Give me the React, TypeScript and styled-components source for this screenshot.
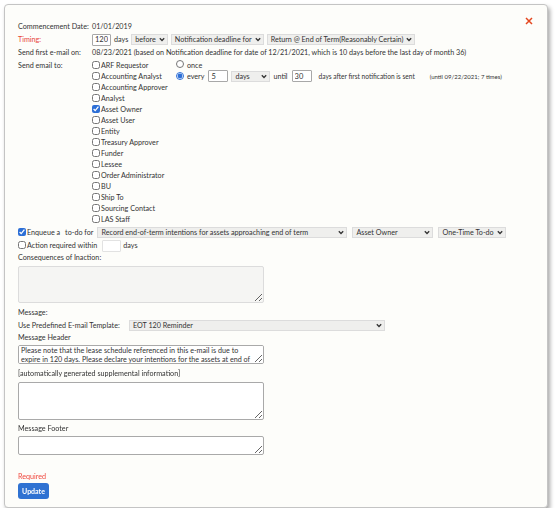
import React from 'react';
import styled, { createGlobalStyle } from 'styled-components';

const GlobalStyle = createGlobalStyle`
  html, body { margin: 0; padding: 0; background: #ffffff; }
  body {
    font-family: Lato, "Liberation Sans", sans-serif;
    font-size: 7.2px;
    color: #333;
  }
`;

const recipients: { name: string; checked?: boolean }[] = [
  { name: 'ARF Requestor' },
  { name: 'Accounting Analyst' },
  { name: 'Accounting Approver' },
  { name: 'Analyst' },
  { name: 'Asset Owner', checked: true },
  { name: 'Asset User' },
  { name: 'Entity' },
  { name: 'Treasury Approver' },
  { name: 'Funder' },
  { name: 'Lessee' },
  { name: 'Order Administrator' },
  { name: 'BU' },
  { name: 'Ship To' },
  { name: 'Sourcing Contact' },
  { name: 'LAS Staff' },
];

function Chevron() {
  return (
    <svg width="6" height="5" viewBox="0 0 6 5">
      <path d="M0.8 1.2 L3 3.5 L5.2 1.2" stroke="#333" strokeWidth="1.3" fill="none" />
    </svg>
  );
}

function Dropdown({ value, width }: { value: string; width?: number }) {
  return (
    <Select $width={width}>
      <span>{value}</span>
      <Chevron />
    </Select>
  );
}

export default function App() {
  return (
    <>
      <GlobalStyle />
      <Panel>
        <Close aria-label="close">
          <svg width="8" height="8" viewBox="0 0 8 8">
            <path d="M1 1 L7 7 M7 1 L1 7" stroke="#e4471f" strokeWidth="1.5" />
          </svg>
        </Close>

        <FieldGrid>
          <Label>Commencement Date:</Label>
          <Value>01/01/2019</Value>

          <Label $required>Timing:</Label>
          <Inline>
            <TextBox $width={19} defaultValue="120" />
            <span>days</span>
            <Dropdown value="before" width={36} />
            <Dropdown value="Notification deadline for" width={92} />
            <Dropdown value="Return @ End of Term(Reasonably Certain)" width={148} />
          </Inline>

          <Label>Send first e-mail on:</Label>
          <Value>
            08/23/2021 (based on Notification deadline for date of 12/21/2021, which is 10 days before the
            last day of month 36)
          </Value>

          <Label>Send email to:</Label>
          <Recipients>
            <CheckList>
              {recipients.map(r => (
                <CheckItem key={r.name}>
                  <Check type="checkbox" defaultChecked={r.checked} />
                  {r.name}
                </CheckItem>
              ))}
            </CheckList>
            <Frequency>
              <RadioRow>
                <Radio type="radio" name="freq" />
                <RaisedText>once</RaisedText>
              </RadioRow>
              <RadioRow>
                <Radio type="radio" name="freq" defaultChecked />
                <span>every</span>
                <TextBox $width={20} defaultValue="5" $left={1} />
                <Dropdown value="days" width={39} />
                <span>until</span>
                <TextBox $width={20} defaultValue="30" $left={1} />
                <AfterText>days after first notification is sent</AfterText>
                <Note>(until 09/22/2021; 7 times)</Note>
              </RadioRow>
            </Frequency>
          </Recipients>
        </FieldGrid>

        <Stack>
          <OptionRow>
            <Check type="checkbox" defaultChecked />
            <span>Enqueue a</span>
            <Gap $w={5} />
            <span>to-do for</span>
            <Gap $w={4} />
            <Dropdown value="Record end-of-term intentions for assets approaching end of term" width={250} />
            <Dropdown value="Asset Owner" width={81} />
            <Dropdown value="One-Time To-do" width={66} />
          </OptionRow>
          <OptionRow>
            <Check type="checkbox" />
            <span>Action required within</span>
            <Gap $w={5} />
            <TextBox $width={19} $plain />
            <Gap $w={2} />
            <span>days</span>
          </OptionRow>

          <Caption>Consequences of Inaction:</Caption>
          <Area $height={37} $shaded />

          <Caption $top={4}>Message:</Caption>
          <TemplateRow>
            <span>Use Predefined E-mail Template:</span>
            <Dropdown value="EOT 120 Reminder" width={256} />
          </TemplateRow>
          <Caption>Message Header</Caption>
          <Area
            $height={19}
            $scroll
            defaultValue="Please note that the lease schedule referenced in this e-mail is due to expire in 120 days. Please declare your intentions for the assets at end of term."
          />
          <Caption $top={4}>[automatically generated supplemental information]</Caption>
          <Area $height={38} />
          <Caption $top={3}>Message Footer</Caption>
          <Area $height={19} />

          <Required>Required</Required>
          <UpdateButton type="button">Update</UpdateButton>
        </Stack>
      </Panel>
    </>
  );
}

const Panel = styled.div`
  position: relative;
  box-sizing: border-box;
  margin: 4px 0 0 4px;
  width: 544px;
  height: 504px;
  padding: 15px 14px 0 13px;
  background: #fdfdfa;
  border: 1px solid #c4c4c4;
  border-radius: 4px;
  box-shadow: 2px 3px 4px rgba(0, 0, 0, 0.35);
`;

const Close = styled.button`
  position: absolute;
  top: 12px;
  right: 14px;
  padding: 0;
  border: none;
  background: none;
  display: flex;
  cursor: pointer;
`;

const FieldGrid = styled.div`
  display: grid;
  grid-template-columns: 74px 1fr;
  grid-auto-rows: minmax(13px, auto);
  align-items: center;
`;

const Label = styled.div<{ $required?: boolean }>`
  color: ${p => (p.$required ? '#e8463a' : '#333')};
  white-space: nowrap;
  align-self: start;
  line-height: 13px;
`;

const Value = styled.div`
  white-space: nowrap;
  line-height: 13px;
`;

const Inline = styled.div`
  display: flex;
  align-items: center;
  gap: 3px;
  white-space: nowrap;
`;

const Select = styled.div<{ $width?: number }>`
  box-sizing: border-box;
  min-width: ${p => (p.$width ? `${p.$width}px` : 'auto')};
  height: 11px;
  padding: 0 2px 0 3px;
  display: flex;
  align-items: center;
  justify-content: space-between;
  gap: 3px;
  background: #efefed;
  border: 1px solid #dcdcdc;
  white-space: nowrap;
  line-height: 9px;
  & > svg { flex-shrink: 0; }
`;

const TextBox = styled.input<{ $width: number; $plain?: boolean; $left?: number }>`
  box-sizing: border-box;
  width: ${p => p.$width}px;
  height: 12px;
  margin-left: ${p => p.$left ?? 0}px;
  padding: 0 2px;
  font: inherit;
  font-size: 7.5px;
  color: #333;
  background: #fff;
  border: 1px solid ${p => (p.$plain ? '#e2e2e2' : '#a8a8a8')};
  border-radius: 1px;
  outline: none;
`;

const Recipients = styled.div`
  display: flex;
  align-items: flex-start;
  padding-top: 1px;
`;

const CheckList = styled.div`
  width: 84px;
  display: flex;
  flex-direction: column;
`;

const CheckItem = styled.label`
  display: flex;
  align-items: center;
  height: 11px;
  white-space: nowrap;
`;

const Check = styled.input`
  margin: 0 1px 0 0;
  width: 8px;
  height: 8px;
  accent-color: #2d6fd6;
  position: relative;
  top: -1px;
`;

const Frequency = styled.div`
  display: flex;
  flex-direction: column;
  margin-top: -2px;
`;

const RadioRow = styled.div`
  display: flex;
  align-items: center;
  height: 12px;
  gap: 3px;
  white-space: nowrap;
`;

const Radio = styled.input`
  margin: 0;
  width: 8px;
  height: 8px;
  accent-color: #2d6fd6;
`;

const RaisedText = styled.span`
  position: relative;
  top: 1px;
`;

const AfterText = styled.span`
  margin-left: 4px;
  font-size: 6.6px;
`;

const Note = styled.span`
  margin-left: 12px;
  font-size: 6px;
`;

const Stack = styled.div`
  display: flex;
  flex-direction: column;
  align-items: flex-start;
  margin-top: 1px;
`;

const OptionRow = styled.label`
  display: flex;
  align-items: center;
  height: 13px;
  white-space: nowrap;
  & > div { margin-right: 5px; }
`;

const Gap = styled.span<{ $w: number }>`
  display: inline-block;
  width: ${p => p.$w}px;
`;

const Caption = styled.div<{ $top?: number }>`
  line-height: 12px;
  margin-top: ${p => p.$top ?? 0}px;
  white-space: nowrap;
`;

const Area = styled.textarea<{ $height: number; $shaded?: boolean; $scroll?: boolean }>`
  box-sizing: border-box;
  width: 246px;
  height: ${p => p.$height}px;
  margin: 1.5px 0 0;
  padding: 1px ${p => (p.$scroll ? 6 : 2)}px 1px 2px;
  font: inherit;
  font-size: 7.2px;
  line-height: 8.5px;
  color: #333;
  background: ${p => (p.$shaded ? '#f5f5f3' : '#fff')};
  border: 1px solid ${p => (p.$shaded ? '#dcdcdc' : '#a9a9a9')};
  border-radius: 2px;
  overflow-y: ${p => (p.$scroll ? 'scroll' : 'auto')};
  scrollbar-width: thin;
  resize: vertical;
`;

const TemplateRow = styled.div`
  display: flex;
  align-items: center;
  height: 13px;
  white-space: nowrap;
  & > span { width: 111px; }
`;

const Required = styled.div`
  margin-top: 16px;
  color: #f0483e;
  line-height: 11px;
`;

const UpdateButton = styled.button`
  margin-top: 0.5px;
  width: 31px;
  height: 16px;
  padding: 0;
  border: none;
  border-radius: 3px;
  background: #2f72d2;
  color: #fff;
  font-family: Lato, "Liberation Sans", sans-serif;
  font-size: 7px;
  font-weight: 700;
  cursor: pointer;
`;
